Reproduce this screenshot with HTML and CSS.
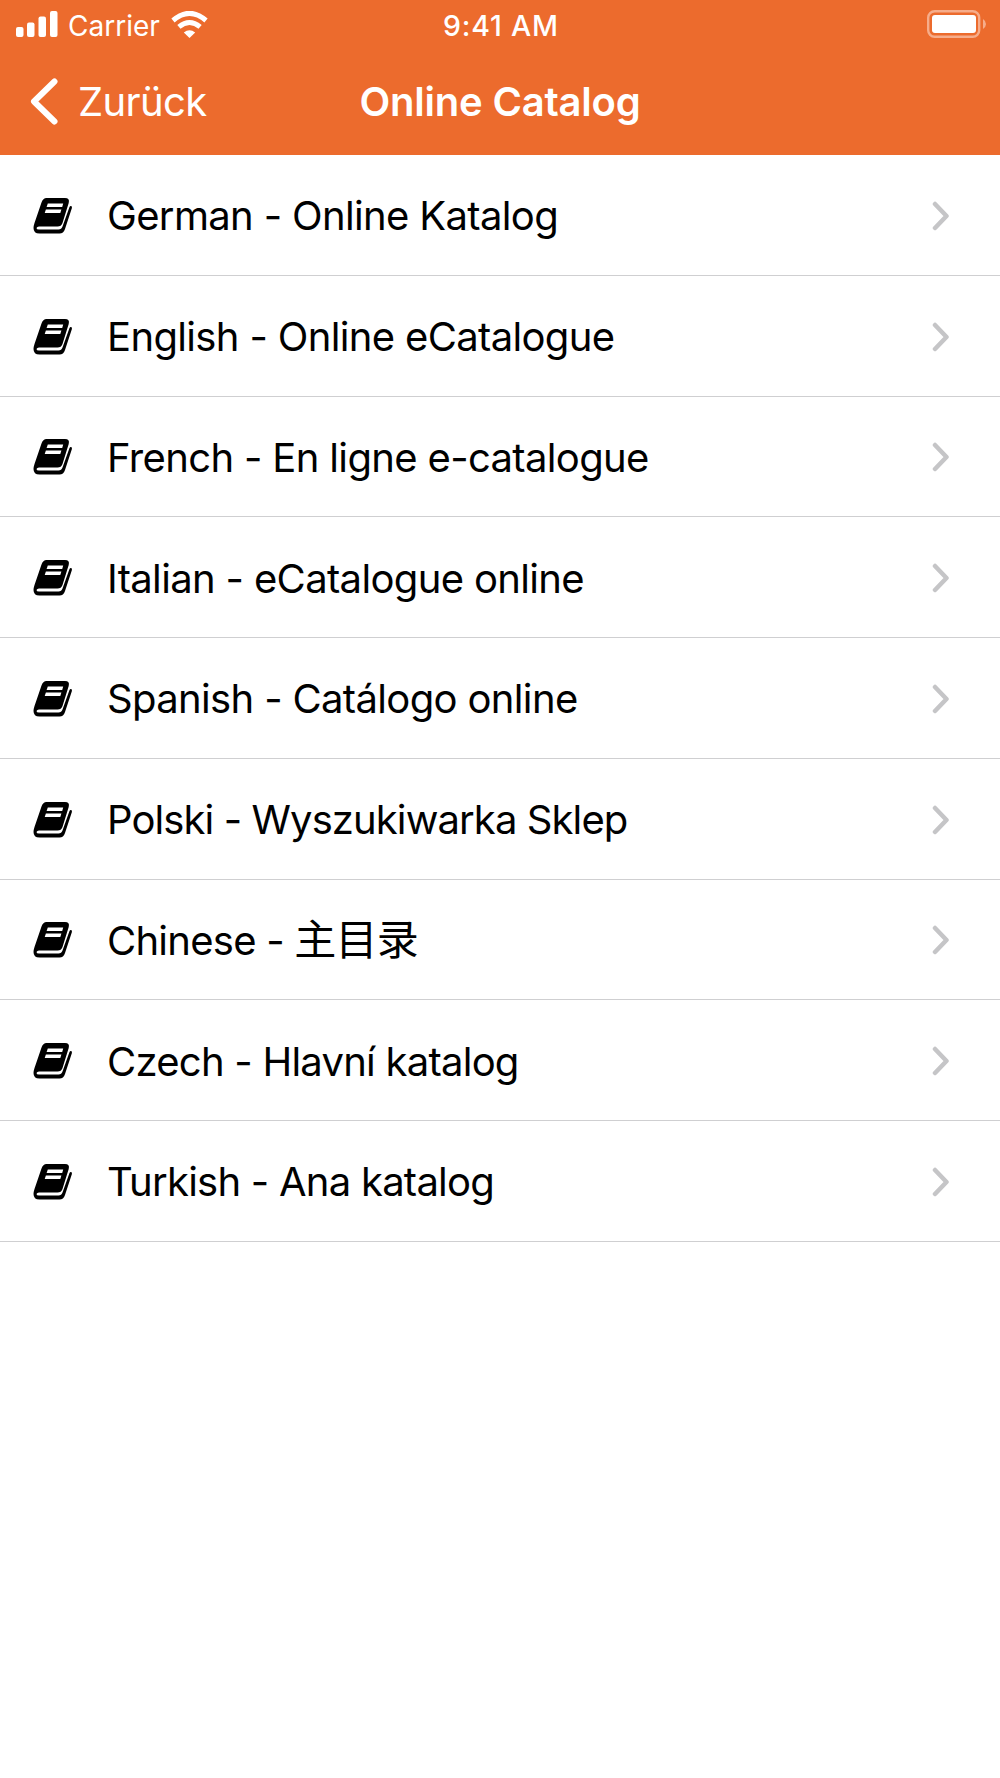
FILE: index.html
```html
<!DOCTYPE html>
<html lang="de">
<head>
  <meta charset="UTF-8">
  <meta name="viewport" content="width=device-width, initial-scale=1.0">
  <title>Online Catalog</title>
  <link rel="stylesheet" href="styles.css">
</head>
<body>
  <svg class="symbols" width="0" height="0">
    <symbol id="book" viewBox="0 0 40 36">
      <path d="M13.500 0H32Q37 0 35.700 5L29.500 25Q28.300 28.500 24.500 28.500H6Q4 28.500 3.500 30Q3.500 31.500 6 31.500H25.500Q28.500 31.500 29.500 28.500L36.500 9Q37.200 7.500 38.200 8Q39.200 8.500 38.900 10L32 31Q30.500 35.500 26.500 35.500H6.500Q0.500 35.500 0.500 30Q0.500 28 1.500 25L8.500 4.500Q10 0 13.500 0Z"/>
      <path d="M14.800 5.600H30.200L29.200 9H13.600ZM12.900 11.600H28.400L27.300 15H11.700Z" fill="#fff"/>
    </symbol>
    <symbol id="arrow" viewBox="0 0 18 30">
      <path d="M3 3L14.500 15L3 27" fill="none" stroke="#c5c5c7" stroke-width="4.500" stroke-linecap="round" stroke-linejoin="round"/>
    </symbol>
  </svg>

  <header>
    <div class="status">
      <div class="network">
        <svg width="42" height="26" viewBox="0 0 42 26" fill="#fff">
          <rect x="0" y="16" width="7.500" height="10" rx="2"/>
          <rect x="11" y="11.500" width="7.500" height="14.500" rx="2"/>
          <rect x="22.500" y="5.500" width="7.500" height="20.500" rx="2"/>
          <rect x="34" y="0" width="7.500" height="26" rx="2"/>
        </svg>
        <span class="carrier">Carrier</span>
        <svg class="wifi" width="37" height="27" viewBox="0 0 37 27">
          <path d="M2 9.500Q18.500-4.800 35 9.500M7.900 15.900Q18.500 7.100 29.100 15.900" fill="none" stroke="#fff" stroke-width="5"/>
          <path d="M12.800 21.500Q18.500 17 24.200 21.500L18.500 27Z" fill="#fff"/>
        </svg>
      </div>
      <span class="time">9:41 AM</span>
      <svg class="battery" width="59" height="28" viewBox="0 0 59 28">
        <rect x="1.200" y="1.200" width="51" height="25.600" rx="6.500" fill="none" stroke="#f6ad8b" stroke-width="2.400"/>
        <rect x="5" y="5" width="44" height="18" rx="3" fill="#fff"/>
        <path d="M56 9Q59 11 59 14T56 19Z" fill="#f6ad8b"/>
      </svg>
    </div>
    <nav>
      <a class="back">
        <svg width="28" height="47" viewBox="0 0 28 47">
          <path d="M24.500 3.500L4 23.500L24.500 43.500" fill="none" stroke="#fff" stroke-width="6" stroke-linecap="round" stroke-linejoin="round"/>
        </svg>
        <span>Zurück</span>
      </a>
      <h1>Online Catalog</h1>
    </nav>
  </header>

  <ul class="list">
    <li><svg class="book"><use href="#book"/></svg><span class="label">German - Online Katalog</span><svg class="arrow"><use href="#arrow"/></svg></li>
    <li><svg class="book"><use href="#book"/></svg><span class="label">English - Online eCatalogue</span><svg class="arrow"><use href="#arrow"/></svg></li>
    <li><svg class="book"><use href="#book"/></svg><span class="label">French - En ligne e-catalogue</span><svg class="arrow"><use href="#arrow"/></svg></li>
    <li><svg class="book"><use href="#book"/></svg><span class="label">Italian - eCatalogue online</span><svg class="arrow"><use href="#arrow"/></svg></li>
    <li><svg class="book"><use href="#book"/></svg><span class="label">Spanish - Catálogo online</span><svg class="arrow"><use href="#arrow"/></svg></li>
    <li><svg class="book"><use href="#book"/></svg><span class="label tight">Polski - Wyszukiwarka Sklep</span><svg class="arrow"><use href="#arrow"/></svg></li>
    <li><svg class="book"><use href="#book"/></svg><span class="label snug">Chinese - <span class="hanzi" lang="zh">主目录</span></span><svg class="arrow"><use href="#arrow"/></svg></li>
    <li><svg class="book"><use href="#book"/></svg><span class="label snug">Czech - Hlavní katalog</span><svg class="arrow"><use href="#arrow"/></svg></li>
    <li><svg class="book"><use href="#book"/></svg><span class="label snug">Turkish - Ana katalog</span><svg class="arrow"><use href="#arrow"/></svg></li>
  </ul>
</body>
</html>
```
FILE: styles.css
```css
* {
  box-sizing: border-box;
}
body {
  margin: 0;
  background: #fff;
  color: #000;
  font-family: Inter, "Noto Sans CJK SC", sans-serif;
  font-size: 40px;
}
svg {
  display: block;
  flex: none;
}
.symbols {
  height: 0;
}
header {
  height: 155px;
  background: #ec6b2d;
  color: #fff;
}
.status {
  display: grid;
  grid-template-columns: 1fr auto 1fr;
  align-items: center;
  height: 48px;
  padding: 0 14px 0 16px;
  font-size: 28px;
}
.network {
  display: flex;
  align-items: center;
}
.carrier {
  width: 92px;
  margin: 3px 0 0 10px;
}
.wifi {
  margin-left: 11px;
}
.time {
  margin: 3px 0 0;
  font-size: 28.5px;
  font-weight: 500;
  letter-spacing: 0.8px;
}
.battery {
  justify-self: end;
}
nav {
  display: grid;
  grid-template-columns: 1fr auto 1fr;
  align-items: center;
  height: 107px;
  padding: 0 30px;
}
.back {
  display: flex;
  align-items: center;
  gap: 20px;
  letter-spacing: -0.6px;
}
h1 {
  margin: 0;
  font-size: 40px;
  font-weight: 600;
  letter-spacing: -0.2px;
}
.list {
  margin: 0;
  padding: 0;
  list-style: none;
}
.list li {
  display: flex;
  align-items: center;
  height: 120.75px;
  padding: 2px 50px 0 33px;
  border-bottom: 1px solid #cfcfd1;
}
.book {
  width: 40px;
  height: 36px;
}
.label {
  flex: 1;
  margin: 1px 0 0 34px;
  line-height: 48px;
  letter-spacing: -0.65px;
}
.snug {
  letter-spacing: -0.75px;
}
.tight {
  letter-spacing: -0.9px;
}
.hanzi {
  font-size: 42px;
}
.arrow {
  width: 18px;
  height: 30px;
}
```
